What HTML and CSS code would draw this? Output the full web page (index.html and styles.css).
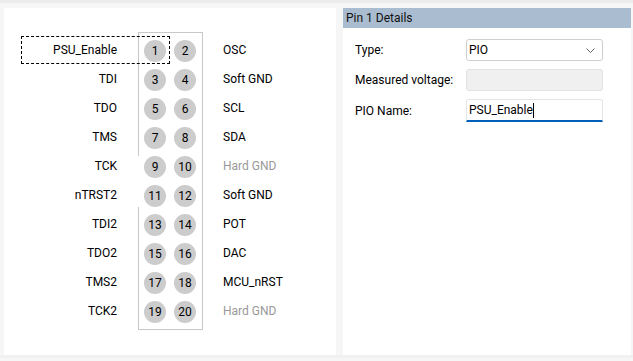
FILE: index.html
```html
<!DOCTYPE html>
<html lang="en">
<head>
  <meta charset="UTF-8">
  <title>Pin Details</title>
  <link rel="stylesheet" href="styles.css">
</head>
<body>
  <div class="main">
    <div class="pinPanel">
      <div class="focusRect"></div>
      <div class="labels left">
        <div>PSU_Enable</div>
        <div>TDI</div>
        <div>TDO</div>
        <div>TMS</div>
        <div>TCK</div>
        <div>nTRST2</div>
        <div>TDI2</div>
        <div>TDO2</div>
        <div>TMS2</div>
        <div>TCK2</div>
      </div>
      <div class="header">
        <div class="pinRow"><span class="pin">1</span><span class="pin">2</span></div>
        <div class="pinRow"><span class="pin">3</span><span class="pin">4</span></div>
        <div class="pinRow"><span class="pin">5</span><span class="pin">6</span></div>
        <div class="pinRow"><span class="pin">7</span><span class="pin">8</span></div>
        <div class="pinRow"><span class="pin">9</span><span class="pin">10</span></div>
        <div class="pinRow"><span class="pin">11</span><span class="pin">12</span></div>
        <div class="pinRow"><span class="pin">13</span><span class="pin">14</span></div>
        <div class="pinRow"><span class="pin">15</span><span class="pin">16</span></div>
        <div class="pinRow"><span class="pin">17</span><span class="pin">18</span></div>
        <div class="pinRow"><span class="pin">19</span><span class="pin">20</span></div>
      </div>
      <div class="labels right">
        <div>OSC</div>
        <div>Soft GND</div>
        <div>SCL</div>
        <div>SDA</div>
        <div class="dim">Hard GND</div>
        <div>Soft GND</div>
        <div>POT</div>
        <div>DAC</div>
        <div>MCU_nRST</div>
        <div class="dim">Hard GND</div>
      </div>
    </div>

    <div class="detailPanel">
      <div class="detailTitle">Pin 1 Details</div>
      <div class="form">
        <label>Type:</label>
        <div class="combo">
          <span>PIO</span>
          <svg width="9" height="5" viewBox="0 0 9 5"><polyline points="0.5,0.5 4.5,4.5 8.5,0.5" fill="none" stroke="#666" stroke-width="1"/></svg>
        </div>
        <label>Measured voltage:</label>
        <div class="field readonly"></div>
        <label>PIO Name:</label>
        <div class="field active">PSU_Enable<span class="caret"></span></div>
      </div>
    </div>
  </div>
</body>
</html>
```

FILE: styles.css
```css
html, body {
  margin: 0;
  padding: 0;
  height: 100%;
}

body {
  font-family: Roboto, 'Liberation Sans', Arial, sans-serif;
  font-size: 12px;
  color: #000;
  background: #f6f6f6;
  border-top: 3px solid #ececec;
  box-sizing: border-box;
  overflow: hidden;
}

.main {
  display: flex;
  gap: 7px;
  padding: 5px 2px 0 4px;
  height: 347px;
  border-bottom: 3px solid #f1f1f1;
}

.pinPanel {
  position: relative;
  display: flex;
  width: 332px;
  background: #fff;
  padding-top: 24px;
  box-sizing: border-box;
}

.focusRect {
  position: absolute;
  left: 17px;
  top: 28px;
  width: 147px;
  height: 26px;
  border: 1px dashed #000;
}

.labels {
  padding-top: 4px;
}

.labels div {
  height: 29px;
  line-height: 29px;
  white-space: nowrap;
}

.labels.left {
  width: 113px;
  text-align: right;
  margin-right: 21px;
}

.labels.right {
  margin-left: 20px;
}

.dim {
  color: #999;
}

.header {
  align-self: flex-start;
  padding: 3px 6px 3px 6px;
  border: 1px solid #c8c8c8;
  border-left: none;
  background: linear-gradient(to bottom, #c8c8c8 0 123px, transparent 123px 174px, #c8c8c8 174px) no-repeat left top / 1px 100%;
}

.pinRow {
  display: flex;
  align-items: center;
  gap: 8px;
  height: 29px;
}

.pin {
  width: 22px;
  height: 22px;
  border-radius: 50%;
  background: #cccccc;
  display: flex;
  align-items: center;
  justify-content: center;
  padding-top: 1px;
  box-sizing: border-box;
}

.detailPanel {
  width: 288px;
  background: #fff;
}

.detailTitle {
  height: 20px;
  line-height: 20px;
  background: #aabcd0;
  padding-left: 3px;
  color: #111;
}

.form {
  display: grid;
  grid-template-columns: 111px 137px;
  row-gap: 8px;
  align-items: center;
  padding: 11px 0 0 12px;
}

.form label {
  white-space: nowrap;
}

.combo, .field {
  height: 22px;
  box-sizing: border-box;
  border: 1px solid #cfcfcf;
  border-radius: 3px;
  padding: 0 7px 0 2px;
  display: flex;
  align-items: center;
  background: #fff;
}

.combo {
  justify-content: space-between;
}

.field.readonly {
  background: #f0f0f0;
  border-color: #e2e2e2;
}

.field.active {
  height: 23px;
  border-color: #e4e4e4;
  border-bottom: 2px solid #005fb8;
  border-radius: 3px 3px 0 0;
}

.caret {
  display: inline-block;
  width: 1px;
  height: 15px;
  background: #000;
}
```
